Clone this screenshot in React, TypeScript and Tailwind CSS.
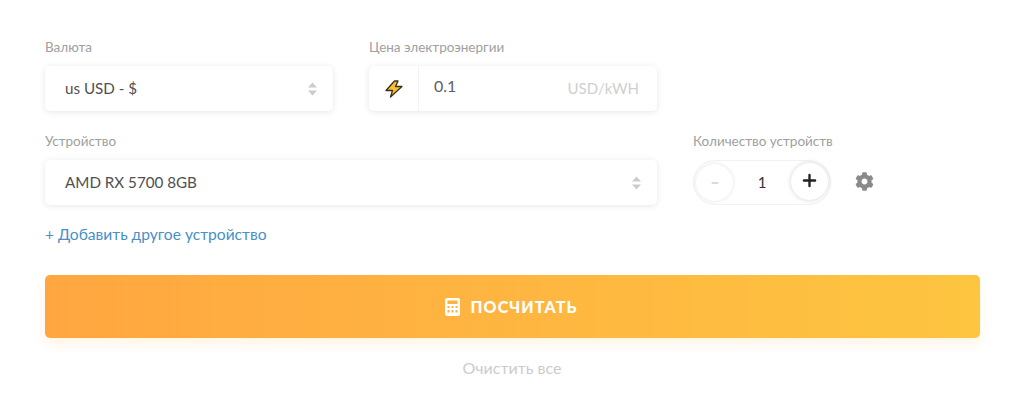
import { Plus, Minus } from "lucide-react";
import { FaCog } from "react-icons/fa";

const font = { fontFamily: "Lato, Roboto, sans-serif" };

const Label = ({ text }: { text: string }) => (
  <div className="h-[20px] text-[13.5px] leading-[20px] text-[#a0a0a0] mb-[9px]">{text}</div>
);

const Arrows = () => (
  <svg width="9" height="14" viewBox="0 0 9 14" fill="#cccccc">
    <path d="M4.5 0.5 L9 5.5 H0 Z" />
    <path d="M4.5 13.5 L9 8.5 H0 Z" />
  </svg>
);

const Select = ({ text }: { text: string }) => (
  <div className="h-[45px] bg-white rounded-[5px] shadow-[0_1px_6px_rgba(0,0,0,0.1)] pl-[20px] pr-[16px] flex items-center justify-between">
    <span className="text-[15.2px] text-[#505050]">{text}</span>
    <Arrows />
  </div>
);

export default function App() {
  return (
    <div
      className="w-[1024px] h-[400px] bg-white px-[45px] pt-[37px] overflow-hidden"
      style={font}
    >
      <div className="grid grid-cols-[288px_288px_288px] gap-x-[36px] gap-y-[20px]">
        <div>
          <Label text="Валюта" />
          <Select text="us USD - $" />
        </div>
        <div>
          <Label text="Цена электроэнергии" />
          <div className="h-[45px] bg-white rounded-[5px] shadow-[0_1px_6px_rgba(0,0,0,0.1)] flex items-center">
            <div className="w-[50px] h-full border-r border-[#f3f3f3] flex items-center justify-center">
              <svg width="18" height="18" viewBox="0 0 18 18">
                <path
                  d="M9.5 1 H13 L10.5 6.5 H17 L5.5 17 L7.5 10.5 H1 Z"
                  fill="#fbc02d"
                  stroke="#3a3020"
                  strokeWidth="1.3"
                  strokeLinejoin="round"
                />
              </svg>
            </div>
            <span className="ml-[15px] text-[16px] text-[#606060] -mt-[5px]">0.1</span>
            <span className="ml-auto mr-[18px] text-[15px] text-[#cfcfcf]">USD/kWH</span>
          </div>
        </div>
        <div />
        <div className="col-span-2">
          <Label text="Устройство" />
          <Select text="AMD RX 5700 8GB" />
        </div>
        <div>
          <Label text="Количество устройств" />
          <div className="flex items-center">
            <div className="w-[138px] h-[45px] rounded-full border border-[#f2f2f2] flex items-center justify-between p-[2px]">
              <div className="w-[37px] h-[37px] rounded-full bg-white shadow-[0_0_4px_rgba(0,0,0,0.12)] flex items-center justify-center">
                <Minus size={10} color="#b5b5b5" strokeWidth={2.5} />
              </div>
              <span className="text-[15px] text-[#333333]">1</span>
              <div className="w-[37px] h-[37px] rounded-full bg-white shadow-[0_0_5px_rgba(0,0,0,0.18)] flex items-center justify-center -mt-[2px]">
                <Plus size={19} color="#222222" strokeWidth={3} className="-mt-[3px]" />
              </div>
            </div>
            <FaCog size={19} color="#8a8a8a" className="ml-[24px] -mt-[3px]" />
          </div>
        </div>
      </div>
      <div className="mt-[18px] h-[22px] leading-[22px] text-[15.6px] text-[#4a90c8]">+ Добавить другое устройство</div>
      <div className="mt-[30px] w-[935px] h-[63px] rounded-[5px] bg-gradient-to-r from-[#ffa640] to-[#fdc540] shadow-[0_6px_12px_rgba(255,180,70,0.15)] flex items-center justify-center gap-[10px] pr-[2px]">
        <svg width="15" height="18" viewBox="0 0 15 18">
          <path
            fillRule="evenodd"
            fill="#ffffff"
            d="M2 0 H13 A2 2 0 0 1 15 2 V16 A2 2 0 0 1 13 18 H2 A2 2 0 0 1 0 16 V2 A2 2 0 0 1 2 0 Z M2.5 2.5 V6 H12.5 V2.5 Z M2.5 8 V10 H4.5 V8 Z M6.5 8 V10 H8.5 V8 Z M10.5 8 V10 H12.5 V8 Z M2.5 12 V14.5 H4.5 V12 Z M6.5 12 V14.5 H8.5 V12 Z M10.5 12 V14.5 H12.5 V12 Z"
          />
        </svg>
        <span className="text-[16px] font-black tracking-[0.07em] text-white">ПОСЧИТАТЬ</span>
      </div>
      <div className="mt-[19px] text-center text-[16px] leading-[22px] text-[#cccccc]">Очистить все</div>
    </div>
  );
}
